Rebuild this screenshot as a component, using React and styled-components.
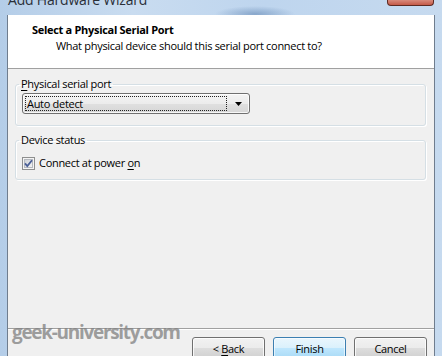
import React from 'react';
import styled, { createGlobalStyle } from 'styled-components';

const GlobalStyle = createGlobalStyle`
  html, body {
    margin: 0;
    padding: 0;
    overflow: hidden;
    background: #bcd4ec;
  }
  body {
    font-family: "Open Sans", "Noto Sans", sans-serif;
  }
`;

const Window = styled.div`
  width: 442px;
  height: 356px;
  display: flex;
  flex-direction: column;
  overflow: hidden;
  background:
    radial-gradient(ellipse 40px 8px at 255px 14px, rgba(70, 110, 160, 0.45), transparent),
    linear-gradient(90deg, #b4cde8 0%, #c9dcf0 30%, #bed5ee 60%, #c6daef 100%);
`;

const TitleBar = styled.div`
  height: 15px;
  flex-shrink: 0;
  display: flex;
  justify-content: space-between;
  align-items: flex-start;
  overflow: hidden;
`;

const Caption = styled.div`
  margin-top: -8px;
  padding-left: 8px;
  font-size: 14px;
  letter-spacing: -0.2px;
  line-height: 15px;
  color: #2a2f38;
`;

const CloseButton = styled.div`
  width: 45px;
  height: 5px;
  margin-right: 8px;
  border: 1px solid #5e2a22;
  border-top: none;
  border-radius: 0 0 4px 4px;
  background: linear-gradient(#d88a7c, #c45a48);
`;

const Frame = styled.div`
  flex: 1;
  display: flex;
  padding: 0 7px;
  min-height: 0;
`;

const Client = styled.div`
  flex: 1;
  display: flex;
  flex-direction: column;
  background: #f0f0f0;
  border-left: 1px solid #6f7d8e;
  border-right: 1px solid #6f7d8e;
  font-size: 11px;
  letter-spacing: -0.3px;
  color: #000;
`;

const Header = styled.div`
  flex-shrink: 0;
  background: #fff;
  border-bottom: 1px solid #a0a0a0;
  padding: 7px 0 0 24px;
  box-sizing: border-box;
  height: 54px;
`;

const HeaderTitle = styled.div`
  font-weight: 700;
  line-height: 16px;
`;

const HeaderSub = styled.div`
  line-height: 16px;
  padding-left: 24px;
`;

const Body = styled.div`
  height: 259px;
  flex-shrink: 0;
  padding: 7px 8px 0 7px;
  box-sizing: border-box;
  display: flex;
  flex-direction: column;
  gap: 6px;
`;

const Group = styled.fieldset`
  margin: 0;
  padding: 0 6px ${p => p.$bottom}px;
  border: 1px solid #d5dfe5;
  border-radius: 3px;
  box-shadow: inset 1px 1px 0 #fff, 1px 1px 0 #fff;
  min-width: 0;
`;

const Legend = styled.legend`
  padding: 0 2px;
  margin-left: -3px;
  line-height: 16px;
`;

const U = styled.span`
  text-decoration: underline;
  text-underline-offset: 2px;
`;

const Combo = styled.div`
  width: 228px;
  height: 21px;
  margin-top: 1px;
  box-sizing: border-box;
  border: 1px solid #707070;
  border-radius: 3px;
  background: linear-gradient(#f4f4f4 0%, #ececec 50%, #e0e0e0 50%, #d6d6d6 100%);
  box-shadow: inset 0 0 0 1px rgba(255, 255, 255, 0.8);
  display: flex;
  align-items: center;
  padding: 0 7px 0 2px;
  gap: 8px;
`;

const FocusText = styled.div`
  flex: 1;
  height: 15px;
  box-sizing: border-box;
  border: 1px dotted #222;
  padding-left: 1px;
  line-height: 13px;
`;

const CheckRow = styled.label`
  display: flex;
  align-items: center;
  gap: 4px;
  margin-top: 7px;
  line-height: 16px;
`;

const Footer = styled.div`
  position: relative;
  flex-shrink: 0;
  border-top: 1px solid #a0a0a0;
  box-shadow: inset 0 1px 0 #fff;
  padding: 8px 7px 0 0;
  display: flex;
  justify-content: flex-end;
  gap: 8px;
`;

const Watermark = styled.div`
  position: absolute;
  left: 4px;
  top: -9px;
  font-size: 19px;
  font-weight: 700;
  letter-spacing: -1.3px;
  color: rgba(128, 128, 128, 0.75);
  line-height: 24px;
`;

const Button = styled.div`
  width: 73px;
  height: 23px;
  box-sizing: border-box;
  border: 1px solid ${p => (p.$default ? '#3c7fb1' : '#707070')};
  border-radius: 3px;
  background: ${p =>
    p.$default
      ? 'linear-gradient(#eaf6fd 0%, #d9f0fc 50%, #bee6fd 50%, #a7d9f5 100%)'
      : 'linear-gradient(#f2f2f2 0%, #ebebeb 50%, #dddddd 50%, #cfcfcf 100%)'};
  box-shadow: inset 0 0 0 1px ${p => (p.$default ? 'rgba(255,255,255,0.6)' : 'rgba(255,255,255,0.8)')};
  display: flex;
  align-items: center;
  justify-content: center;
  line-height: 16px;
  white-space: pre;
`;

function CheckBox() {
  return (
    <svg width="13" height="13" viewBox="0 0 13 13">
      <defs>
        <linearGradient id="cbg" x1="0" y1="0" x2="1" y2="1">
          <stop offset="0" stopColor="#cbcfd5" />
          <stop offset="1" stopColor="#f6f6f6" />
        </linearGradient>
      </defs>
      <rect x="0.5" y="0.5" width="12" height="12" fill="#f4f4f4" stroke="#8e8f8f" />
      <rect x="2.5" y="2.5" width="8" height="8" fill="url(#cbg)" stroke="#b5b9bf" strokeWidth="1" />
      <path d="M3 6.3 L5.3 9 L10 3.2" fill="none" stroke="#4a5f97" strokeWidth="1.8" />
    </svg>
  );
}

function Arrow() {
  return (
    <svg width="7" height="4" viewBox="0 0 7 4">
      <path d="M0 0 H7 L3.5 4 Z" fill="#000" />
    </svg>
  );
}

export default function App() {
  return (
    <>
      <GlobalStyle />
      <Window>
        <TitleBar>
          <Caption>Add Hardware Wizard</Caption>
          <CloseButton />
        </TitleBar>
        <Frame>
          <Client>
            <Header>
              <HeaderTitle>Select a Physical Serial Port</HeaderTitle>
              <HeaderSub>What physical device should this serial port connect to?</HeaderSub>
            </Header>
            <Body>
              <Group $bottom={11}>
                <Legend><U>P</U>hysical serial port</Legend>
                <Combo>
                  <FocusText>Auto detect</FocusText>
                  <Arrow />
                </Combo>
              </Group>
              <Group $bottom={8}>
                <Legend>Device status</Legend>
                <CheckRow>
                  <CheckBox />
                  <span>Connect at power <U>o</U>n</span>
                </CheckRow>
              </Group>
            </Body>
            <Footer>
              <Watermark>geek-university.com</Watermark>
              <Button>{'< '}<U>B</U>ack</Button>
              <Button $default>Finish</Button>
              <Button>Cancel</Button>
            </Footer>
          </Client>
        </Frame>
      </Window>
    </>
  );
}
